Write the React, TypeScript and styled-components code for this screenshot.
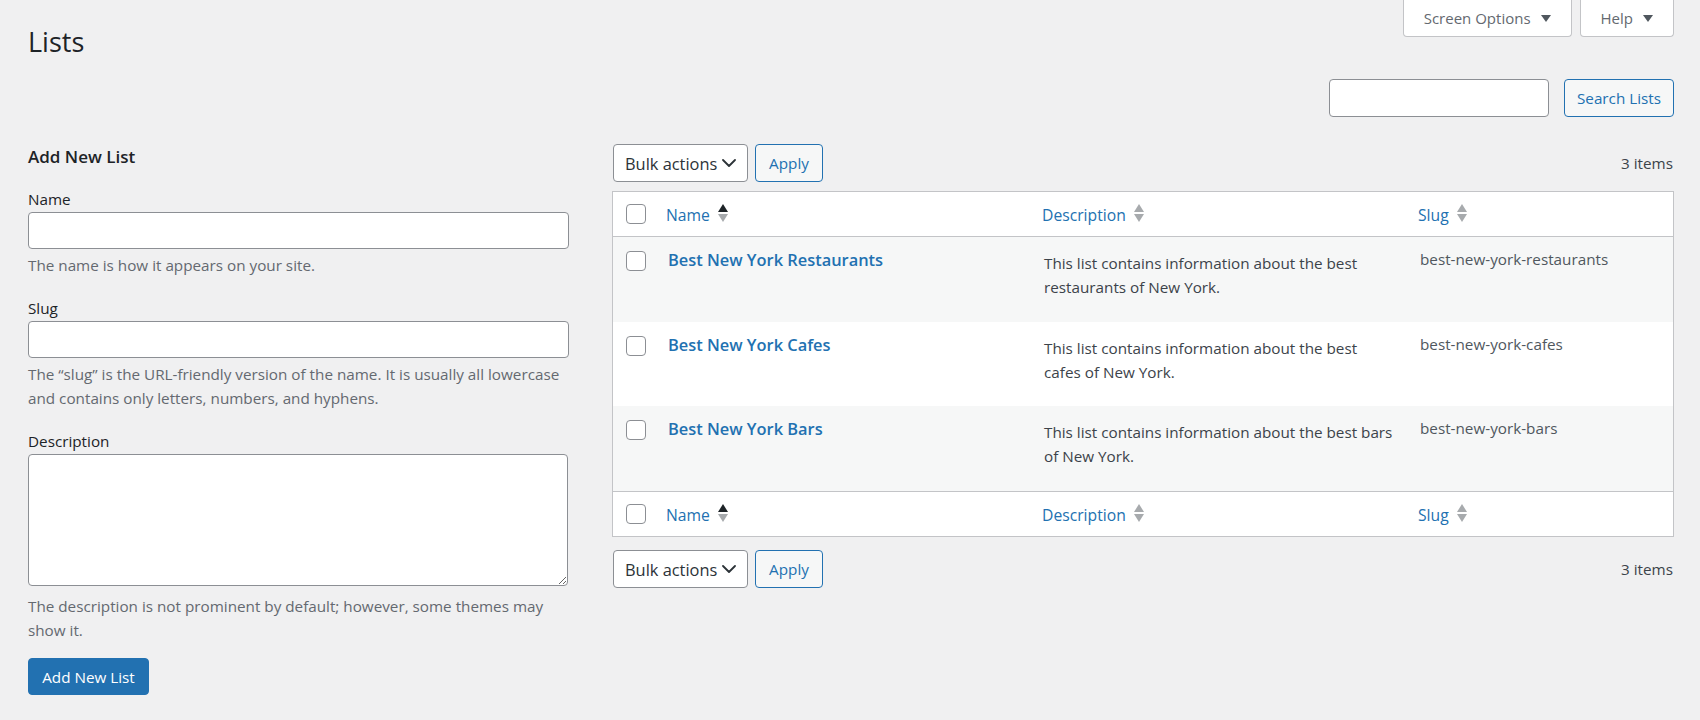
import React from "react";
import styled, { createGlobalStyle } from "styled-components";

const GlobalStyle = createGlobalStyle`
  html, body { margin: 0; padding: 0; background: #f0f0f1; }
  body {
    font-family: "Open Sans", "Noto Sans", Arial, sans-serif;
    font-size: 15.25px;
    color: #3c434a;
  }
  * { box-sizing: border-box; }
`;

const Page = styled.div`
  padding: 0 26px 0 28px;
  min-height: 720px;
`;

const TopBar = styled.div`
  display: flex;
  justify-content: space-between;
  align-items: flex-start;
`;

const Title = styled.h1`
  margin: 24px 0 0;
  font-size: 27px;
  line-height: 36px;
  font-weight: 400;
  color: #1d2327;
`;

const MetaLinks = styled.div`
  display: flex;
  gap: 8px;
`;

const MetaToggle = styled.button`
  height: 37px;
  display: flex;
  align-items: center;
  gap: 10px;
  padding: 0 20px;
  background: #fff;
  border: 1px solid #c3c4c7;
  border-top: 0;
  border-radius: 0 0 4px 4px;
  color: #646970;
  font: inherit;
  font-size: 15px;
  cursor: pointer;
`;

const SearchRow = styled.div`
  display: flex;
  justify-content: flex-end;
  gap: 15px;
  margin-top: 19px;
`;

const TextInput = styled.input<{ $width?: string; $height?: number }>`
  display: block;
  width: ${(p) => p.$width || "100%"};
  height: ${(p) => p.$height || 37}px;
  margin: 0;
  padding: 0 8px;
  border: 1px solid #8c8f94;
  border-radius: 4px;
  background: #fff;
  font: inherit;
  color: #2c3338;
`;

const SecondaryButton = styled.button<{ $width: number }>`
  width: ${(p) => p.$width}px;
  height: 38px;
  padding: 0;
  border: 1px solid #2271b1;
  border-radius: 4px;
  background: #f6f7f7;
  color: #2271b1;
  font: inherit;
  font-size: 15.25px;
  cursor: pointer;
`;

const Columns = styled.div`
  display: grid;
  grid-template-columns: 541px 1fr;
  column-gap: 43px;
  margin-top: 27px;
`;

const FormCol = styled.div`
  display: flex;
  flex-direction: column;
  align-items: flex-start;
`;

const FormTitle = styled.h2`
  margin: 2px 0 0;
  font-size: 17px;
  line-height: 22px;
  font-weight: 600;
  color: #1d2327;
`;

const Field = styled.div`
  width: 100%;
  margin-top: 20px;
`;

const Label = styled.label`
  display: block;
  line-height: 22px;
  color: #1d2327;
  margin-bottom: 2px;
`;

const Help = styled.p<{ $gap?: number }>`
  margin: ${(p) => p.$gap ?? 4}px 0 0;
  line-height: 24px;
  color: #646970;
`;

const TextArea = styled.textarea`
  display: block;
  width: 540px;
  height: 132px;
  margin: 0;
  padding: 4px 8px;
  border: 1px solid #8c8f94;
  border-radius: 4px;
  background: #fff;
  font: inherit;
  resize: both;
`;

const PrimaryButton = styled.button`
  margin-top: 16px;
  width: 121px;
  height: 37px;
  padding: 0;
  border: 1px solid #2271b1;
  border-radius: 4px;
  background: #2271b1;
  color: #fff;
  font: inherit;
  font-size: 15.25px;
  cursor: pointer;
`;

const ListCol = styled.div`
  display: flex;
  flex-direction: column;
`;

const TableNav = styled.div<{ $top?: number }>`
  display: flex;
  align-items: center;
  gap: 7px;
  height: 38px;
  padding-left: 1px;
  margin-top: ${(p) => p.$top ?? 0}px;
`;

const SelectBox = styled.div`
  width: 135px;
  height: 38px;
  display: flex;
  align-items: center;
  justify-content: space-between;
  padding: 0 11px;
  border: 1px solid #8c8f94;
  border-radius: 4px;
  background: #fff;
  color: #2c3338;
  font-size: 16.4px;
`;

const Count = styled.span`
  margin-left: auto;
  padding-right: 1px;
  color: #3c434a;
`;

const Table = styled.div`
  margin-top: 9px;
  border: 1px solid #c3c4c7;
  background: #fff;
`;

const GridRow = styled.div<{ $striped?: boolean; $kind: "head" | "foot" | "body"; $height?: number }>`
  display: grid;
  grid-template-columns: 43px 376px 376px 1fr;
  align-items: start;
  height: ${(p) => p.$height ?? 45}px;
  background: ${(p) => (p.$striped ? "#f6f7f7" : "#fff")};
  border-bottom: ${(p) => (p.$kind === "head" ? "1px solid #c3c4c7" : "0")};
  border-top: ${(p) => (p.$kind === "foot" ? "1px solid #c3c4c7" : "0")};
`;

const CheckCell = styled.div<{ $top: number }>`
  padding: ${(p) => p.$top}px 0 0 13px;
`;

const Check = styled.input.attrs({ type: "checkbox" })`
  appearance: none;
  display: block;
  width: 20px;
  height: 20px;
  margin: 0;
  border: 1px solid #8c8f94;
  border-radius: 4px;
  background: #fff;
`;

const HeadCell = styled.div`
  padding: 12px 0 0 10px;
`;

const SortLink = styled.a`
  display: inline-flex;
  align-items: flex-start;
  gap: 8px;
  color: #2271b1;
  font-size: 15.7px;
  line-height: 22px;
  text-decoration: none;
  cursor: pointer;
`;

const TitleCell = styled.div`
  padding: 11px 0 0 12px;
`;

const RowTitle = styled.a`
  font-size: 16.4px;
  line-height: 23px;
  font-weight: 600;
  color: #2271b1;
  text-decoration: none;
  cursor: pointer;
`;

const DescCell = styled.div`
  padding: 14px 0 0 12px;
  line-height: 24px;
  color: #3c434a;
`;

const Line = styled.span`
  display: block;
  white-space: nowrap;
`;

const SlugCell = styled.div`
  padding: 10px 0 0 12px;
  line-height: 24px;
  color: #50575e;
`;

const Caret = () => (
  <svg width="10" height="7" viewBox="0 0 10 7" aria-hidden>
    <polygon points="0,0 10,0 5,7" fill="#50575e" />
  </svg>
);

const Chevron = () => (
  <svg width="14" height="8" viewBox="0 0 14 8" aria-hidden>
    <polyline points="1,1 7,7 13,1" fill="none" stroke="#2c3338" strokeWidth="1.8" strokeLinecap="round" strokeLinejoin="round" />
  </svg>
);

const SortIcon = ({ active }: { active?: boolean }) => (
  <svg width="10" height="18" viewBox="0 0 10 18" aria-hidden>
    <polygon points="0,8 5,0 10,8" fill={active ? "#1d2327" : "#a7aaad"} />
    <polygon points="0,10 10,10 5,18" fill="#a7aaad" />
  </svg>
);

type ListItem = { name: string; desc: string[]; slug: string };

const items: ListItem[] = [
  {
    name: "Best New York Restaurants",
    desc: ["This list contains information about the best", "restaurants of New York."],
    slug: "best-new-york-restaurants",
  },
  {
    name: "Best New York Cafes",
    desc: ["This list contains information about the best", "cafes of New York."],
    slug: "best-new-york-cafes",
  },
  {
    name: "Best New York Bars",
    desc: ["This list contains information about the best bars", "of New York."],
    slug: "best-new-york-bars",
  },
];

const rowHeights = [85, 84, 85];

const HeaderRow = ({ kind }: { kind: "head" | "foot" }) => (
  <GridRow $kind={kind}>
    <CheckCell $top={12}>
      <Check aria-label="Select all" />
    </CheckCell>
    <HeadCell>
      <SortLink>
        Name <SortIcon active />
      </SortLink>
    </HeadCell>
    <HeadCell>
      <SortLink>
        Description <SortIcon />
      </SortLink>
    </HeadCell>
    <HeadCell>
      <SortLink>
        Slug <SortIcon />
      </SortLink>
    </HeadCell>
  </GridRow>
);

const BulkNav = ({ top }: { top?: number }) => (
  <TableNav $top={top}>
    <SelectBox>
      <span>Bulk actions</span>
      <Chevron />
    </SelectBox>
    <SecondaryButton $width={68}>Apply</SecondaryButton>
    <Count>3 items</Count>
  </TableNav>
);

export default function App() {
  return (
    <>
      <GlobalStyle />
      <Page>
        <TopBar>
          <Title>Lists</Title>
          <MetaLinks>
            <MetaToggle>
              Screen Options <Caret />
            </MetaToggle>
            <MetaToggle>
              Help <Caret />
            </MetaToggle>
          </MetaLinks>
        </TopBar>

        <SearchRow>
          <TextInput $width="220px" $height={38} aria-label="Search Lists" />
          <SecondaryButton $width={110}>Search Lists</SecondaryButton>
        </SearchRow>

        <Columns>
          <FormCol>
            <FormTitle>Add New List</FormTitle>
            <Field>
              <Label>Name</Label>
              <TextInput />
              <Help>The name is how it appears on your site.</Help>
            </Field>
            <Field>
              <Label>Slug</Label>
              <TextInput />
              <Help>
                The “slug” is the URL-friendly version of the name. It is usually all lowercase
                <br />
                and contains only letters, numbers, and hyphens.
              </Help>
            </Field>
            <Field>
              <Label>Description</Label>
              <TextArea />
              <Help $gap={8}>
                The description is not prominent by default; however, some themes may
                <br />
                show it.
              </Help>
            </Field>
            <PrimaryButton>Add New List</PrimaryButton>
          </FormCol>

          <ListCol>
            <BulkNav />
            <Table>
              <HeaderRow kind="head" />
              {items.map((item, i) => (
                <GridRow key={item.slug} $kind="body" $height={rowHeights[i]} $striped={i % 2 === 0}>
                  <CheckCell $top={14}>
                    <Check aria-label={`Select ${item.name}`} />
                  </CheckCell>
                  <TitleCell>
                    <RowTitle>{item.name}</RowTitle>
                  </TitleCell>
                  <DescCell>
                    {item.desc.map((l) => (
                      <Line key={l}>{l}</Line>
                    ))}
                  </DescCell>
                  <SlugCell>{item.slug}</SlugCell>
                </GridRow>
              ))}
              <HeaderRow kind="foot" />
            </Table>
            <BulkNav top={13} />
          </ListCol>
        </Columns>
      </Page>
    </>
  );
}
